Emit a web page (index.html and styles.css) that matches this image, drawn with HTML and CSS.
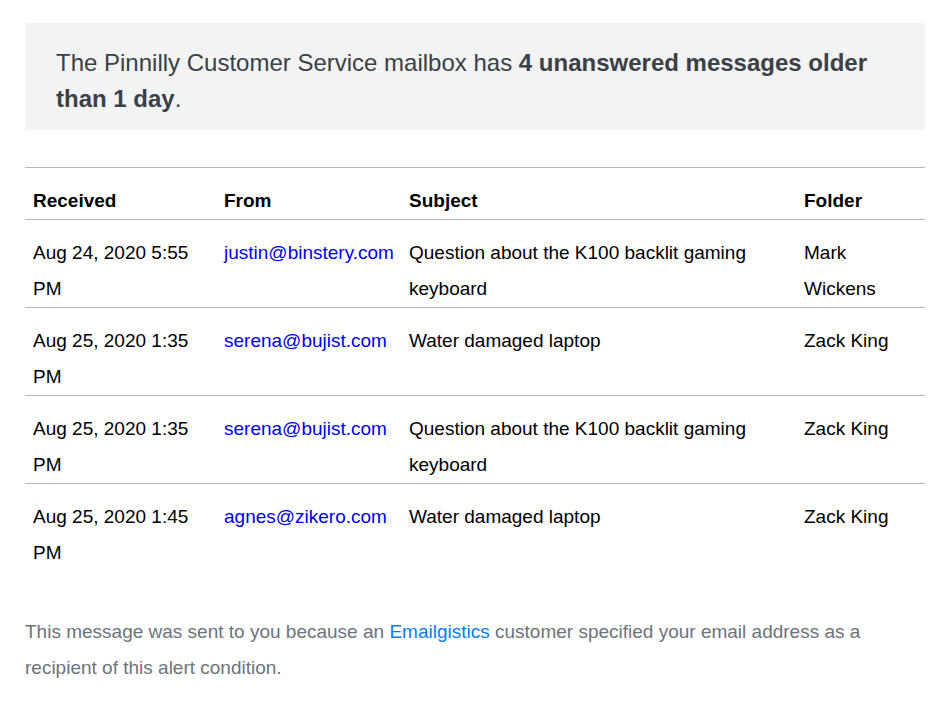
FILE: index.html
```html
<!DOCTYPE html>
<html>
<head>
<meta charset="utf-8">
<link rel="stylesheet" href="styles.css">
</head>
<body>
<div class="wrap">
  <div class="alert">The Pinnilly Customer Service mailbox has <strong>4 unanswered messages older than 1 day</strong>.</div>
  <table class="msgs">
    <colgroup>
      <col class="c1"><col class="c2"><col class="c3"><col class="c4">
    </colgroup>
    <thead>
      <tr><th>Received</th><th>From</th><th>Subject</th><th>Folder</th></tr>
    </thead>
    <tbody>
      <tr><td>Aug 24, 2020 5:55 PM</td><td><a href="#">justin@binstery.com</a></td><td>Question about the K100 backlit gaming keyboard</td><td>Mark Wickens</td></tr>
      <tr><td>Aug 25, 2020 1:35 PM</td><td><a href="#">serena@bujist.com</a></td><td>Water damaged laptop</td><td>Zack King</td></tr>
      <tr><td>Aug 25, 2020 1:35 PM</td><td><a href="#">serena@bujist.com</a></td><td>Question about the K100 backlit gaming keyboard</td><td>Zack King</td></tr>
      <tr><td>Aug 25, 2020 1:45 PM</td><td><a href="#">agnes@zikero.com</a></td><td>Water damaged laptop</td><td>Zack King</td></tr>
    </tbody>
  </table>
  <p class="foot">This message was sent to you because an <a href="#">Emailgistics</a> customer specified your email address as a recipient of this alert condition.</p>
</div>
</body>
</html>
```
FILE: styles.css
```css
html, body { margin: 0; padding: 0; background: #fff; }
body { font-family: "Liberation Sans", Arial, sans-serif; }
.wrap { width: 900px; margin: 0 0 0 25px; padding-top: 23px; }
.alert {
  background: #f2f3f5;
  color: #3c4045;
  font-size: 24px;
  line-height: 36px;
  padding: 22px 31px 13px 31px;
  height: 72px;
}
.alert strong { font-weight: bold; }
.msgs {
  width: 900px;
  margin-top: 37px;
  border-collapse: collapse;
  table-layout: fixed;
  font-size: 19px;
  line-height: 36px;
  color: #000;
}
.c1 { width: 191px; }
.c2 { width: 185px; }
.c3 { width: 395px; }
.c4 { width: 129px; }
.msgs th {
  text-align: left;
  font-weight: bold;
  padding: 15px 8px 0 8px;
  border-top: 1px solid #b4b8bc;
  border-bottom: 1px solid #b4b8bc;
  vertical-align: top;
}
.msgs td {
  padding: 15px 8px 0 8px;
  vertical-align: top;
  border-bottom: 1px solid #b4b8bc;
}
.msgs tbody tr:last-child td { border-bottom: none; }
.msgs a { color: #0000ee; text-decoration: none; }
.foot {
  margin: 43px 0 0 0;
  font-size: 19px;
  line-height: 36px;
  color: #6c737b;
}
.foot a { color: #0a7cf0; text-decoration: none; }
```
